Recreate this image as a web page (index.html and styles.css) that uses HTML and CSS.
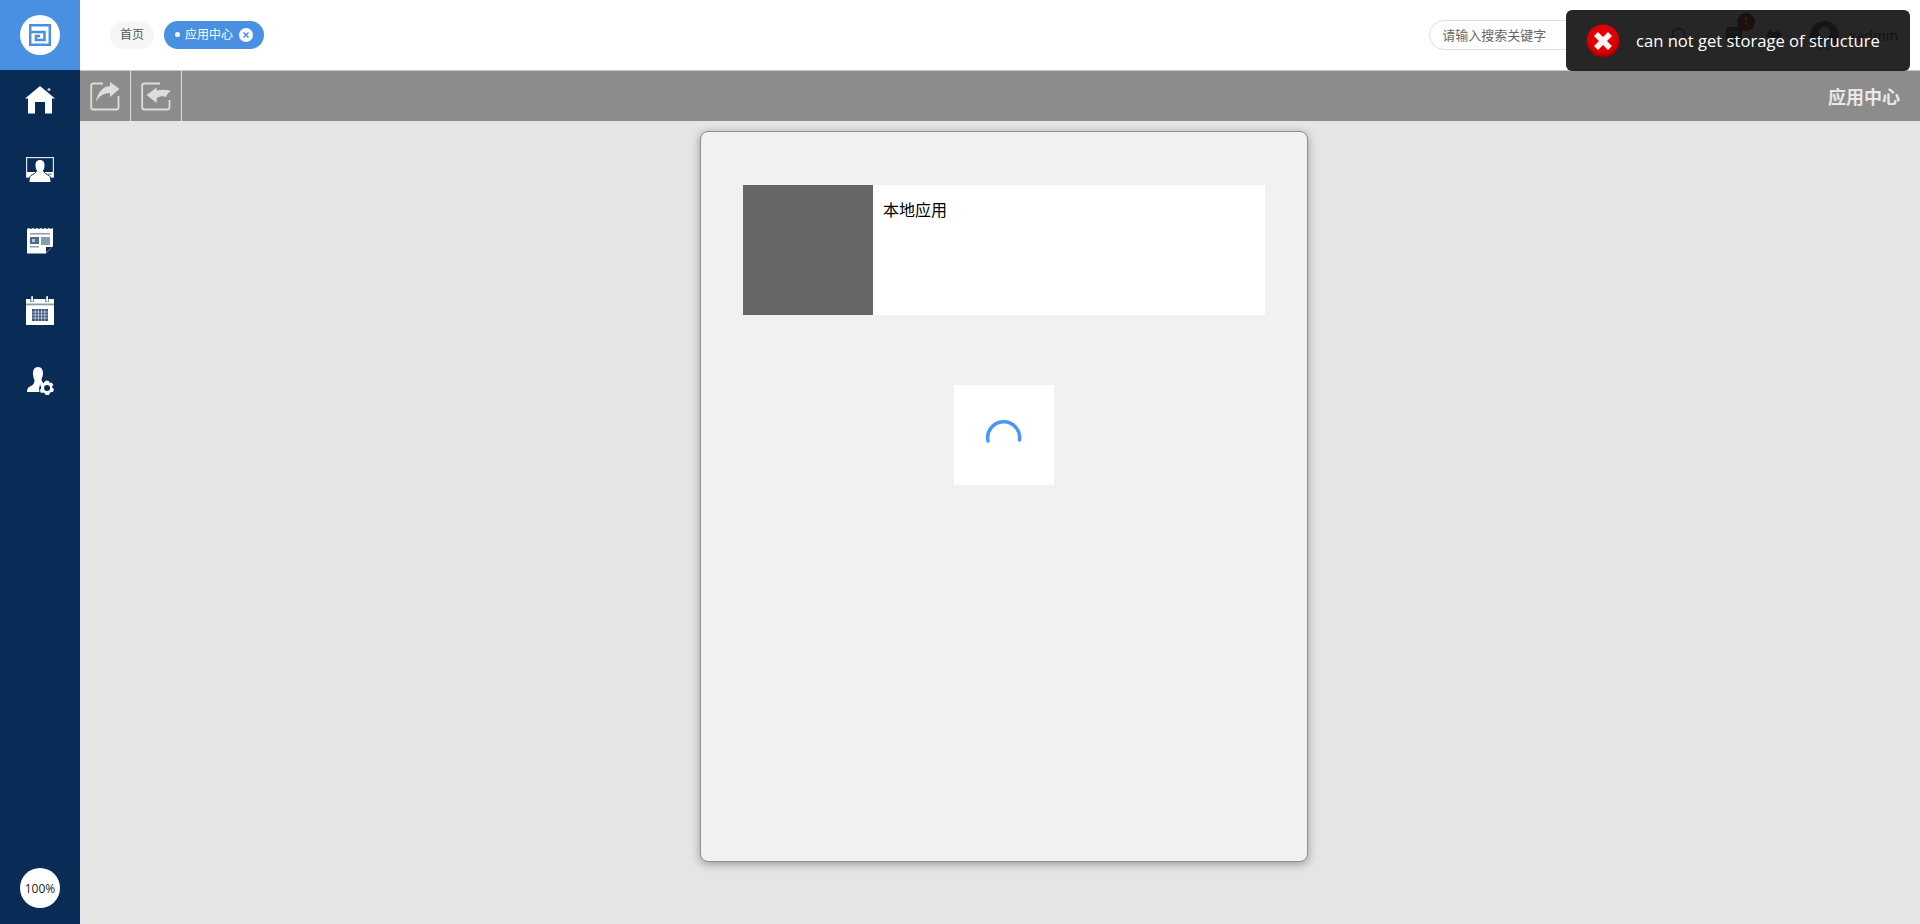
FILE: index.html
```html
<!DOCTYPE html>
<html lang="en">
  <head>
    <meta charset="UTF-8" />
    <meta name="viewport" content="width=device-width, initial-scale=1.0" />
    <title>应用中心</title>
    <link rel="stylesheet" href="styles.css">
  </head>
  <body>
    <aside class="sidebar">
      <div class="logo-box">
        <div class="logo-circle">
          <svg width="22" height="22" viewBox="0 0 22 22" fill="none" stroke="#4a90e2" stroke-width="2.500">
            <path d="M1.200 7V1.200H20.800V20.800H1.200V8H15.500V16H7V12H11" />
          </svg>
        </div>
      </div>
      <nav class="side-nav">
        <!-- home -->
        <a class="side-item">
          <svg width="30" height="28" viewBox="0 0 30 28" fill="#fff">
            <path d="M15 0L30 12.500H27V27.500H20V16H10V27.500H3V12.500H0Z" />
            <circle cx="24" cy="3.500" r="1.600" fill="#b9c5d3" />
          </svg>
        </a>
        <!-- monitor -->
        <a class="side-item">
          <svg width="28" height="26" viewBox="0 0 28 26" fill="none">
            <rect x="0.600" y="0.600" width="26.800" height="19.500" stroke="#dfe5ec" stroke-width="1.200" />
            <rect x="1" y="15" width="26" height="5" fill="#fff" />
            <path d="M14 2.500C17.500 2.500 19 5.500 19 8.500C19 11 18 13 17.500 14C18 16 21 17.500 23 18.500C24.500 19.500 25 22 25 25.500H3C3 22 3.500 19.500 5 18.500C7 17.500 10 16 10.500 14C10 13 9 11 9 8.500C9 5.500 10.500 2.500 14 2.500Z" fill="#fff" stroke="#082c56" stroke-width="1" />
            <rect x="22" y="16.500" width="3.500" height="1.500" fill="#8a9cb3" />
          </svg>
        </a>
        <!-- news -->
        <a class="side-item">
          <svg width="26" height="26" viewBox="0 0 26 26" fill="#fff">
            <path d="M0 1L2 0L4 1L6 0L8 1L10 0L12 1L14 0L16 1L18 0L20 1L22 0L24 1L26 0V18L19 25.500H0Z" />
            <rect x="3" y="5" width="20" height="1.500" fill="#8a9cb3" />
            <rect x="3" y="9" width="9" height="7" fill="#4d6a8d" />
            <rect x="5" y="11" width="3" height="3" fill="#b9c5d3" />
            <rect x="14" y="9" width="9" height="8" fill="#8a9cb3" />
            <rect x="3" y="18" width="9" height="1.500" fill="#8a9cb3" />
            <path d="M19 25L19 19H25Z" fill="#082c56" />
          </svg>
        </a>
        <!-- calendar -->
        <a class="side-item">
          <svg width="28" height="29" viewBox="0 0 28 29" fill="#fff">
            <path d="M0 3H4.500V6H7.500V3H19.500V6H22.500V3H28V29H0Z" />
            <rect x="5.200" y="0" width="1.800" height="6" rx="0.900" />
            <rect x="20.200" y="0" width="1.800" height="6" rx="0.900" />
            <rect x="0" y="7.500" width="28" height="1.800" fill="#8a9cb3" />
            <path d="M6 13H22V25H6Z" fill="#34527a" />
            <path d="M9.200 13V25M12.400 13V25M15.600 13V25M18.800 13V25M6 16H22M6 19H22M6 22H22" stroke="#fff" stroke-width="0.600" />
          </svg>
        </a>
        <!-- user settings -->
        <a class="side-item">
          <svg width="27" height="28" viewBox="0 0 27 28" fill="#fff">
            <path d="M11 0C14.500 0 16 3 16 6C16 9 15 11 14.500 12C14.500 13.500 15 14.500 16 15.500C13 16.500 11.500 20 12.500 25H0C0 22 1 20.500 3 19.500C5 18.500 7.500 17.500 7.500 13C6.500 11 6 9 6 6C6 3 7.500 0 11 0Z" />
            <path d="M19 13.500L22 14L22.500 16L24.500 15.500L26.500 18L25 19.500L25.500 21L27 22L26 25L24 25L22.500 26.500L22 28H18.500L18 26.500L16 25.500L14 26L12.700 23L14 22V19.500L13 18L15 15.500L16.500 16ZM20 18A3 3 0 1 0 20.100 24A3 3 0 1 0 20 18Z" fill-rule="evenodd" />
          </svg>
        </a>
      </nav>
      <div class="zoom-level">100%</div>
    </aside>

    <div class="main">
      <header class="topbar">
        <div class="tabs">
          <span class="tab">首页</span>
          <span class="tab tab-active">
            <i class="tab-dot"></i>应用中心
            <svg class="tab-close" width="14" height="14" viewBox="0 0 14 14">
              <circle cx="7" cy="7" r="7" fill="#fff" />
              <path d="M4.500 4.500L9.500 9.500M9.500 4.500L4.500 9.500" stroke="#4a90e2" stroke-width="1.500" />
            </svg>
          </span>
        </div>
        <div class="top-tools">
          <div class="search">
            <span class="search-text">请输入搜索关键字</span>
            <svg width="16" height="16" viewBox="0 0 16 16" fill="none" stroke="#555" stroke-width="1.300">
              <circle cx="7.500" cy="7.500" r="6" />
              <path d="M12 12L15 15" />
            </svg>
          </div>
          <div class="mail">
            <svg width="16" height="16" viewBox="0 0 16 16" fill="#555">
              <rect width="16" height="16" rx="2" />
              <circle cx="4" cy="5" r="1" fill="#fff" />
              <circle cx="8" cy="5" r="1" fill="#fff" />
              <circle cx="12" cy="5" r="1" fill="#fff" />
            </svg>
            <span class="badge">1</span>
          </div>
          <svg class="swap" width="16" height="14" viewBox="0 0 16 14" fill="#555">
            <path d="M0 7L5 1V4H11V1L16 7L11 13V10H5V13Z" />
          </svg>
          <svg class="avatar" width="29" height="29" viewBox="0 0 30 30">
            <circle cx="15" cy="15" r="15" fill="#555" />
            <circle cx="15" cy="12" r="6" fill="#fff" />
            <path d="M5 26C7 19 23 19 25 26L15 30Z" fill="#fff" />
          </svg>
          <span class="username">xadmin</span>
        </div>
      </header>

      <div class="toolbar">
        <a class="tool-btn">
          <svg width="30" height="30" viewBox="0 0 30 30" fill="none" stroke="#ddd" stroke-width="1.800">
            <path d="M13 2.500H3.500C2 2.500 1.200 3.300 1.200 4.500V26.500C1.200 27.700 2 28.500 3.500 28.500H26.500C27.700 28.500 28.500 27.700 28.500 26.500V15" />
            <path d="M20 1L29.500 8L20 16V12C14 12 9 15 6 21C7 13 12 5.500 20 5Z" fill="#ddd" stroke="none" />
          </svg>
        </a>
        <a class="tool-btn">
          <svg width="30" height="30" viewBox="0 0 30 30" fill="none" stroke="#ddd" stroke-width="1.800">
            <path d="M19 2.500H3.500C2 2.500 1.200 3.300 1.200 4.500V26.500C1.200 27.700 2 28.500 3.500 28.500H26.500C27.700 28.500 28.500 27.700 28.500 26.500V19" />
            <path d="M15.700 6.500L5.500 14L15.700 22V17C19 15 23 14.500 25 16C26 13.500 27.500 11 30 10C25 8.500 20 8.500 15.700 9.500Z" fill="#ddd" stroke="none" />
          </svg>
        </a>
        <div class="toolbar-title">应用中心</div>
      </div>

      <div class="content">
        <section class="panel">
          <div class="app-card">
            <div class="app-thumb"></div>
            <div class="app-name">本地应用</div>
          </div>
          <div class="loader">
            <svg width="40" height="40" viewBox="0 0 40 40" fill="none" stroke="#4d94ff" stroke-width="3.500" stroke-linecap="round">
              <path d="M4 26A16 16 0 1 1 35.500 25" />
            </svg>
          </div>
        </section>
      </div>
    </div>

    <div class="toast">
      <svg class="toast-icon" width="34" height="34" viewBox="0 0 34 34">
        <defs>
          <radialGradient id="redBall" cx="50%" cy="40%" r="60%">
            <stop offset="0%" stop-color="#f00000" />
            <stop offset="75%" stop-color="#d80000" />
            <stop offset="100%" stop-color="#900000" />
          </radialGradient>
        </defs>
        <circle cx="17" cy="17" r="16.500" fill="url(#redBall)" />
        <path d="M17 13L22 8L26 12L21 17L26 22L22 26L17 21L12 26L8 22L13 17L8 12L12 8Z" fill="#f4f4f4" />
      </svg>
      <span class="toast-text">can not get storage of structure</span>
    </div>
  </body>
</html>
```

FILE: styles.css
```css
* {
  box-sizing: border-box;
}

body {
  margin: 0;
  height: 924px;
  display: flex;
  overflow: hidden;
  font-family: "Open Sans", "Noto Sans CJK SC", sans-serif;
  color: #333;
  background: #e5e5e5;
}

svg {
  display: block;
}

/* left bar */
.sidebar {
  width: 80px;
  flex-shrink: 0;
  display: flex;
  flex-direction: column;
  background: #082c56;
}

.logo-box {
  height: 70px;
  display: flex;
  align-items: center;
  justify-content: center;
  background: #4a90e2;
}

.logo-circle,
.zoom-level {
  width: 40px;
  height: 40px;
  border-radius: 50%;
  background: #fff;
  display: flex;
  align-items: center;
  justify-content: center;
}

.side-nav {
  display: flex;
  flex-direction: column;
  gap: 10px;
}

.side-item {
  height: 60.25px;
  display: flex;
  align-items: center;
  justify-content: center;
}

.zoom-level {
  margin: auto 20px 16px;
  font-size: 12px;
  color: #222;
}

.main {
  flex: 1;
  display: flex;
  flex-direction: column;
  min-width: 0;
}

/* top bar */
.topbar {
  height: 70px;
  background: #fff;
  display: flex;
  align-items: center;
  justify-content: space-between;
  padding: 0 22px 0 30px;
}

.tabs {
  display: flex;
  gap: 10px;
}

.tab {
  height: 28px;
  padding: 0 10px 2px;
  display: flex;
  align-items: center;
  border-radius: 14px;
  font-size: 12px;
  color: #555;
  background: #f6f6f6;
}

.tab-active {
  width: 100px;
  padding: 0 11px 2px;
  color: #fff;
  background: #4a90e2;
}

.tab-dot {
  width: 5px;
  height: 5px;
  margin-right: 5px;
  border-radius: 50%;
  background: #fff;
}

.tab-close {
  margin: 2px 0 0 6px;
}

.top-tools {
  display: flex;
  align-items: center;
}

.search {
  width: 270px;
  height: 30px;
  padding: 0 11px 0 12px;
  display: flex;
  align-items: center;
  justify-content: space-between;
  border: 1px solid #ddd;
  border-radius: 15px;
}

.search-text {
  margin-bottom: 2px;
  font-size: 13px;
  color: #666;
}

.mail {
  position: relative;
  margin-left: 27px;
}

.badge {
  position: absolute;
  top: -14px;
  right: -13px;
  width: 18px;
  height: 18px;
  border-radius: 50%;
  background: #c00;
  color: #fff;
  font-size: 12px;
  line-height: 18px;
  text-align: center;
}

.swap {
  margin-left: 24px;
}

.avatar {
  margin-left: 28px;
}

.username {
  margin-left: 10px;
  font-size: 14px;
  color: #333;
}

/* grey toolbar */
.toolbar {
  height: 51px;
  display: flex;
  align-items: stretch;
  background: #8c8c8c;
  border-top: 1px solid #c8c8c8;
}

.tool-btn {
  width: 51px;
  display: flex;
  align-items: center;
  justify-content: center;
  border-right: 1px solid #ddd;
}

.toolbar-title {
  margin-left: auto;
  padding-right: 20px;
  align-self: center;
  font-size: 18px;
  font-weight: bold;
  color: #e8e8e8;
}

/* content */
.content {
  flex: 1;
  display: flex;
  justify-content: center;
  padding: 10px 0 0 8px;
}

.panel {
  width: 608px;
  height: 731px;
  padding: 53px 42px 0 42px;
  display: flex;
  flex-direction: column;
  background: #f1f1f1;
  border: 1px solid #8f8f8f;
  border-radius: 8px;
  box-shadow: 0 2px 10px rgba(0, 0, 0, 0.35);
}

.app-card {
  height: 130px;
  display: flex;
  background: #fff;
}

.app-thumb {
  width: 130px;
  background: #666;
}

.app-name {
  padding: 14px 10px;
  font-size: 16px;
  line-height: 22px;
  color: #000;
}

.loader {
  width: 100px;
  height: 100px;
  margin-top: 70px;
  align-self: center;
  display: flex;
  align-items: center;
  justify-content: center;
  background: #fff;
}

/* error toast over the top bar */
.toast {
  position: absolute;
  top: 10px;
  left: 1566px;
  width: 344px;
  height: 61px;
  padding-left: 21px;
  display: flex;
  align-items: center;
  border-radius: 6px;
  background: rgba(14, 14, 14, 0.9);
}

.toast-icon {
  margin-left: -1px;
}

.toast-text {
  margin-left: 16px;
  font-size: 16.6px;
  color: #fff;
  white-space: nowrap;
}
```
